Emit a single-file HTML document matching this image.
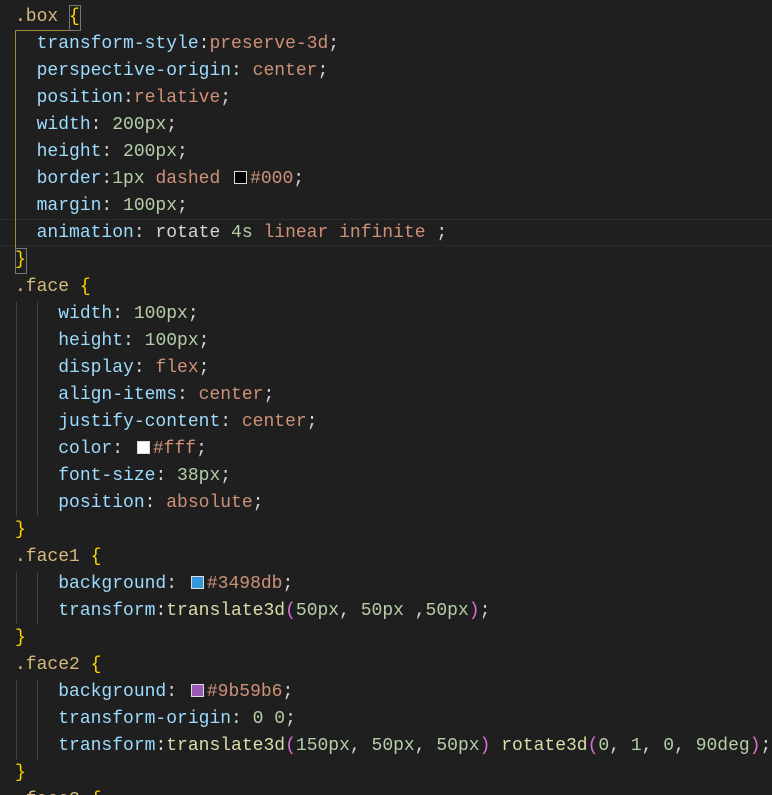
<!DOCTYPE html>
<html><head><style>
html,body{margin:0;background:#1f1f1f;width:772px;height:795px;overflow:hidden}
body{position:relative;font-family:"Liberation Mono",monospace;font-size:18px;color:#d4d4d4}
.l{position:absolute;left:15px;height:27px;line-height:27px;white-space:pre}
.s{color:#d7ba7d}.b{color:#ffd700}.p{color:#9cdcfe}.v{color:#ce9178}.n{color:#b5cea8}.f{color:#dcdcaa}.q{color:#da70d6}
.sw{display:inline-block;width:11px;height:11px;border:1px solid #ddd;margin:0 3px 0 3px;vertical-align:-1px}
.g{position:absolute;width:1px;background:#404040}
</style></head><body>
<div style="position:absolute;left:0;top:219px;width:772px;height:25px;border-top:1px solid #2c2c2c;border-bottom:1px solid #2c2c2c"></div>
<div style="position:absolute;left:15px;top:30px;width:1px;height:236px;background:#a08a3a"></div>
<div style="position:absolute;left:15px;top:30px;width:64px;height:1px;background:#a08a3a"></div>
<div style="position:absolute;left:69px;top:5px;width:10px;height:24px;border:1px solid #777"></div>
<div style="position:absolute;left:15px;top:248px;width:10px;height:24px;border:1px solid #777"></div>
<div class="g" style="left:16px;top:302px;height:214px"></div><div class="g" style="left:37px;top:302px;height:214px"></div>
<div class="g" style="left:16px;top:572px;height:52px"></div><div class="g" style="left:37px;top:572px;height:52px"></div>
<div class="g" style="left:16px;top:680px;height:80px"></div><div class="g" style="left:37px;top:680px;height:80px"></div>
<div class="l" style="top:4px"><span class="s">.box</span> <span class="b">{</span></div>
<div class="l" style="top:31px">  <span class="p">transform-style</span>:<span class="v">preserve-3d</span>;</div>
<div class="l" style="top:58px">  <span class="p">perspective-origin</span>: <span class="v">center</span>;</div>
<div class="l" style="top:85px">  <span class="p">position</span>:<span class="v">relative</span>;</div>
<div class="l" style="top:112px">  <span class="p">width</span>: <span class="n">200px</span>;</div>
<div class="l" style="top:139px">  <span class="p">height</span>: <span class="n">200px</span>;</div>
<div class="l" style="top:166px">  <span class="p">border</span>:<span class="n">1px</span> <span class="v">dashed</span> <span class="sw" style="background:#000"></span><span class="v">#000</span>;</div>
<div class="l" style="top:193px">  <span class="p">margin</span>: <span class="n">100px</span>;</div>
<div class="l" style="top:220px">  <span class="p">animation</span>: rotate <span class="n">4s</span> <span class="v">linear</span> <span class="v">infinite</span> ;</div>
<div class="l" style="top:247px"><span class="b">}</span></div>
<div class="l" style="top:274px"><span class="s">.face</span> <span class="b">{</span></div>
<div class="l" style="top:301px">    <span class="p">width</span>: <span class="n">100px</span>;</div>
<div class="l" style="top:328px">    <span class="p">height</span>: <span class="n">100px</span>;</div>
<div class="l" style="top:355px">    <span class="p">display</span>: <span class="v">flex</span>;</div>
<div class="l" style="top:382px">    <span class="p">align-items</span>: <span class="v">center</span>;</div>
<div class="l" style="top:409px">    <span class="p">justify-content</span>: <span class="v">center</span>;</div>
<div class="l" style="top:436px">    <span class="p">color</span>: <span class="sw" style="background:#fff"></span><span class="v">#fff</span>;</div>
<div class="l" style="top:463px">    <span class="p">font-size</span>: <span class="n">38px</span>;</div>
<div class="l" style="top:490px">    <span class="p">position</span>: <span class="v">absolute</span>;</div>
<div class="l" style="top:517px"><span class="b">}</span></div>
<div class="l" style="top:544px"><span class="s">.face1</span> <span class="b">{</span></div>
<div class="l" style="top:571px">    <span class="p">background</span>: <span class="sw" style="background:#3498db"></span><span class="v">#3498db</span>;</div>
<div class="l" style="top:598px">    <span class="p">transform</span>:<span class="f">translate3d</span><span class="q">(</span><span class="n">50px</span>, <span class="n">50px</span> ,<span class="n">50px</span><span class="q">)</span>;</div>
<div class="l" style="top:625px"><span class="b">}</span></div>
<div class="l" style="top:652px"><span class="s">.face2</span> <span class="b">{</span></div>
<div class="l" style="top:679px">    <span class="p">background</span>: <span class="sw" style="background:#9b59b6"></span><span class="v">#9b59b6</span>;</div>
<div class="l" style="top:706px">    <span class="p">transform-origin</span>: <span class="n">0</span> <span class="n">0</span>;</div>
<div class="l" style="top:733px">    <span class="p">transform</span>:<span class="f">translate3d</span><span class="q">(</span><span class="n">150px</span>, <span class="n">50px</span>, <span class="n">50px</span><span class="q">)</span> <span class="f">rotate3d</span><span class="q">(</span><span class="n">0</span>, <span class="n">1</span>, <span class="n">0</span>, <span class="n">90deg</span><span class="q">)</span>;</div>
<div class="l" style="top:760px"><span class="b">}</span></div>
<div class="l" style="top:787px"><span class="s">.face3</span> <span class="b">{</span></div>
</body></html>
